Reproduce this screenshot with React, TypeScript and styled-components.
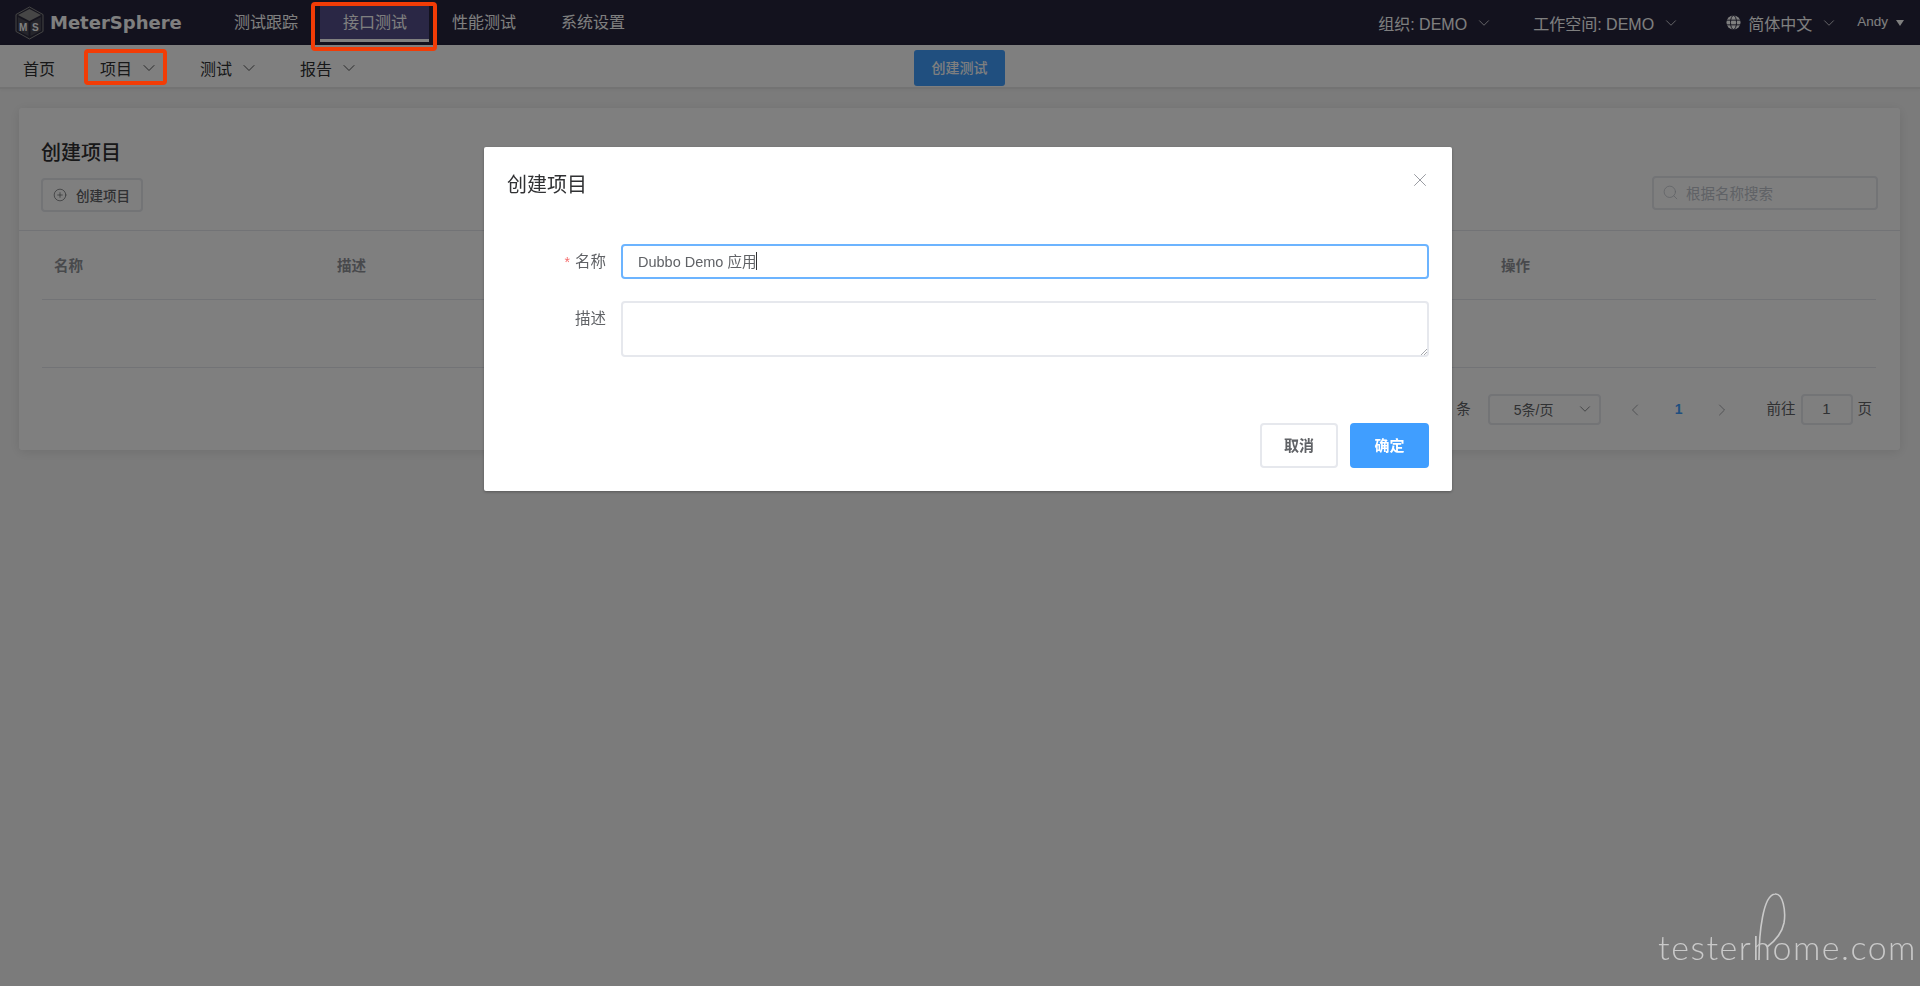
import React from "react";
import styled, { createGlobalStyle } from "styled-components";
import { ChevronDown, ChevronLeft, ChevronRight, CirclePlus, Search, X } from "lucide-react";

const GlobalStyle = createGlobalStyle`
  html, body {
    margin: 0;
    height: 100%;
    background: #f7f7f7;
    font-family: "Liberation Sans", "Noto Sans CJK SC", sans-serif;
    color: #303133;
  }
  * {
    box-sizing: border-box;
  }
`;

const Page = styled.div`
  width: 1920px;
  height: 986px;
  overflow: hidden;
`;

const Header = styled.header`
  height: 45px;
  background: #26243c;
  display: flex;
  align-items: center;
  color: #fff;
`;

const Logo = styled.div`
  width: 211px;
  padding-left: 15px;
  display: flex;
  align-items: center;
  gap: 6px;
`;

const LogoText = styled.span`
  font-family: "DejaVu Sans", sans-serif;
  font-weight: 700;
  font-size: 18px;
  color: #fff;
`;

const TopNav = styled.nav`
  display: flex;
  height: 45px;
`;

const TopNavItem = styled.div<{ active?: boolean }>`
  width: 109px;
  height: 40px;
  margin-top: 2px;
  padding-left: 23px;
  font-size: 16px;
  line-height: 41px;
  color: #fff;
  background: ${(props) => (props.active ? "#544f8a" : "transparent")};
  border-bottom: ${(props) => (props.active ? "3px solid #fff" : "none")};
`;

const HeaderRight = styled.div`
  margin-left: auto;
  display: flex;
  align-items: center;
  padding-right: 16px;
  height: 45px;
`;

const HeaderMenu = styled.div<{ width: number }>`
  width: ${(props) => props.width}px;
  display: flex;
  align-items: center;
  gap: 8px;
  font-size: 16px;
  white-space: nowrap;
`;

const Globe = styled.svg`
  width: 15px;
  height: 15px;
  margin-right: -1px;
`;

const UserName = styled.span`
  font-size: 13.5px;
  margin-right: 8px;
  position: relative;
  top: -1px;
`;

const Caret = styled.span`
  width: 0;
  height: 0;
  border-left: 4px solid transparent;
  border-right: 4px solid transparent;
  border-top: 6px solid #fff;
`;

const SubNav = styled.div`
  height: 44px;
  background: #fff;
  border-bottom: 2px solid #e6e6e6;
  box-shadow: 0 1px 4px rgba(0, 0, 0, 0.05);
  display: flex;
  align-items: center;
  padding: 4px 0 0 23px;
  font-size: 16px;
  color: #303133;
`;

const SubNavItem = styled.div<{ width: number }>`
  width: ${(props) => props.width}px;
  display: flex;
  align-items: center;
  gap: 7px;
  white-space: nowrap;
`;

const CreateTest = styled.div`
  margin-left: 514px;
  width: 91px;
  height: 36px;
  border-radius: 3px;
  background: #409eff;
  color: #fff;
  font-size: 14px;
  font-weight: 500;
  line-height: 36px;
  text-align: center;
`;

const Content = styled.main`
  padding: 19px 20px 0 19px;
`;

const Card = styled.section`
  height: 342px;
  background: #fff;
  border-radius: 3px;
  box-shadow: 0 2px 12px rgba(0, 0, 0, 0.1);
  display: flex;
  flex-direction: column;
`;

const CardHeader = styled.div`
  height: 123px;
  padding: 0 22px 18px;
  border-bottom: 1px solid #e4e7ed;
  display: flex;
  justify-content: space-between;
  align-items: flex-end;
`;

const CardTitle = styled.h2`
  margin: 0 0 10px;
  font-size: 20px;
  line-height: 30px;
  font-weight: 500;
  color: #303133;
`;

const PlainButton = styled.div`
  width: 102px;
  height: 34px;
  border: 2px solid #e6e8ed;
  border-radius: 4px;
  display: flex;
  align-items: center;
  gap: 9px;
  padding-left: 10px;
  font-size: 13.5px;
  font-weight: 500;
  color: #606266;
`;

const SearchBox = styled.div`
  width: 226px;
  height: 34px;
  margin: 0 0 2px;
  border: 2px solid #e6e8ed;
  border-radius: 4px;
  display: flex;
  align-items: center;
  gap: 7px;
  padding: 0 0 2px 8px;
  font-size: 14.5px;
  color: #c0c4cc;
`;

const TableHead = styled.div`
  margin: 0 24px 0 23px;
  height: 69px;
  padding-bottom: 2px;
  border-bottom: 1px solid #e4e7ed;
  display: grid;
  grid-template-columns: 12px 283px 1164px 1fr;
  align-items: center;
  font-size: 14.5px;
  font-weight: 700;
  color: #909399;
`;

const TableBody = styled.div`
  margin: 0 24px 0 23px;
  height: 68px;
  border-bottom: 1px solid #e4e7ed;
`;

const Pagination = styled.div`
  height: 82px;
  padding: 26px 28px 0 0;
  display: flex;
  justify-content: flex-end;
  align-items: flex-start;
  font-size: 14px;
  color: #606266;
`;

const PagerText = styled.span<{ gap?: number }>`
  margin-left: ${(props) => props.gap ?? 0}px;
  line-height: 31px;
  font-size: 14.5px;
`;

const SizeSelect = styled.div`
  width: 113px;
  height: 31px;
  margin-left: 17px;
  border: 2px solid #e6e8ed;
  border-radius: 4px;
  display: flex;
  align-items: center;
  padding: 0 0 1px 24px;
  gap: 23px;
  font-size: 14px;
`;

const PagerButton = styled.div<{ gap: number }>`
  height: 31px;
  margin-left: ${(props) => props.gap}px;
  display: flex;
  align-items: center;
  color: #909399;
`;

const PagerNumber = styled.div`
  margin-left: 30px;
  line-height: 31px;
  font-size: 14px;
  font-weight: 700;
  color: #409eff;
`;

const JumpInput = styled.div`
  width: 52px;
  height: 31px;
  margin: 0 5px;
  border: 2px solid #e6e8ed;
  border-radius: 4px;
  text-align: center;
  line-height: 26px;
  font-size: 15px;
`;

const Mask = styled.div`
  position: fixed;
  inset: 0;
  background: rgba(0, 0, 0, 0.5);
`;

const Dialog = styled.div`
  position: fixed;
  left: 484px;
  top: 147px;
  width: 968px;
  height: 344px;
  background: #fff;
  border-radius: 2px;
  box-shadow: 0 1px 3px rgba(0, 0, 0, 0.3);
  padding: 23px 23px 0;
  display: flex;
  flex-direction: column;
`;

const DialogHeader = styled.div`
  display: flex;
  justify-content: space-between;
  height: 30px;
`;

const DialogTitle = styled.span`
  font-size: 20px;
  line-height: 30px;
  color: #303133;
`;

const CloseButton = styled.span`
  margin: -1px -2px 0 0;
  color: #909399;
`;

const FormRow = styled.div<{ high?: boolean }>`
  display: grid;
  grid-template-columns: 114px 1fr;
  margin-top: ${(props) => (props.high ? "21px" : "44px")};
`;

const FormLabel = styled.label`
  padding-right: 15px;
  text-align: right;
  font-size: 15.5px;
  line-height: 36px;
  color: #606266;
`;

const Star = styled.span`
  color: #f56c6c;
  margin-right: 5px;
  font-size: 14px;
`;

const NameInput = styled.div`
  height: 35px;
  border: 2px solid #6cb4ff;
  border-radius: 4px;
  padding: 0 0 2px 15px;
  font-size: 14.5px;
  color: #606266;
  display: flex;
  align-items: center;
`;

const TextCaret = styled.span`
  width: 1px;
  height: 18px;
  background: #303133;
`;

const DescArea = styled.div`
  height: 56px;
  border: 2px solid #e6e8ed;
  border-radius: 4px;
  position: relative;
`;

const ResizeGrip = styled.svg`
  position: absolute;
  right: 0;
  bottom: 0;
  width: 7px;
  height: 7px;
`;

const DialogFooter = styled.div`
  margin-top: auto;
  padding-bottom: 23px;
  display: flex;
  justify-content: flex-end;
  gap: 12px;
`;

const DialogButton = styled.div<{ primary?: boolean }>`
  width: ${(props) => (props.primary ? "79px" : "78px")};
  height: 45px;
  border-radius: 4px;
  border: 2px solid ${(props) => (props.primary ? "#409eff" : "#e6e8ed")};
  background: ${(props) => (props.primary ? "#409eff" : "#fff")};
  color: ${(props) => (props.primary ? "#fff" : "#606266")};
  font-size: 15px;
  font-weight: 700;
  line-height: 41px;
  text-align: center;
`;

const Annotation = styled.div<{ left: number; top: number; width: number; height: number }>`
  position: fixed;
  left: ${(props) => props.left}px;
  top: ${(props) => props.top}px;
  width: ${(props) => props.width}px;
  height: ${(props) => props.height}px;
  border: 4px solid #f23c06;
  border-radius: 4px;
`;

const Watermark = styled.div`
  position: fixed;
  right: 3px;
  bottom: 19px;
  font-family: "Lato", sans-serif;
  font-weight: 300;
  font-size: 34px;
  letter-spacing: 1.500px;
  line-height: 40px;
  white-space: nowrap;
  color: #c9c9c9;
`;

const WatermarkLoop = styled.svg`
  position: absolute;
  left: 97px;
  top: -34px;
  width: 35px;
  height: 68px;
`;

function MsLogo() {
  return (
    <svg width="29" height="34" viewBox="0 0 29 34">
      <path d="M14.5 1 28 8.500v17L14.5 33 1 25.500v-17Z" fill="#2c2b3d" stroke="#8a8a8a" strokeWidth="1" />
      <path d="M14.5 3 26 9l-11.500 6L3 9Z" fill="#8c8c8c" />
      <path d="M3 11l10.500 5.500V30L3 24.500Z" fill="#a8a8a8" opacity="0.25" />
      <path d="M26 11l-10.500 5.500V30L26 24.500Z" fill="#a8a8a8" opacity="0.25" />
      <text x="4" y="25" fontSize="10" fontWeight="700" fontFamily="Liberation Sans" fill="#fff">M</text>
      <text x="17" y="25" fontSize="10" fontWeight="700" fontFamily="Liberation Sans" fill="#fff">S</text>
    </svg>
  );
}

function App() {
  return (
    <Page>
      <GlobalStyle />
      <Header>
        <Logo>
          <MsLogo />
          <LogoText>MeterSphere</LogoText>
        </Logo>
        <TopNav>
          <TopNavItem>测试跟踪</TopNavItem>
          <TopNavItem active>接口测试</TopNavItem>
          <TopNavItem>性能测试</TopNavItem>
          <TopNavItem>系统设置</TopNavItem>
        </TopNav>
        <HeaderRight>
          <HeaderMenu width={155}>
            组织: DEMO
            <ChevronDown size={18} strokeWidth={1} />
          </HeaderMenu>
          <HeaderMenu width={193}>
            工作空间: DEMO
            <ChevronDown size={18} strokeWidth={1} />
          </HeaderMenu>
          <HeaderMenu width={131}>
            <Globe viewBox="0 0 16 16">
              <circle cx="8" cy="8" r="7.500" fill="#fff" />
              <ellipse cx="8" cy="8" rx="3.200" ry="7.500" fill="none" stroke="#26243c" strokeWidth="1" />
              <path d="M0 5.500h16M0 10.500h16" stroke="#26243c" strokeWidth="1" />
            </Globe>
            简体中文
            <ChevronDown size={18} strokeWidth={1} />
          </HeaderMenu>
          <UserName>Andy</UserName>
          <Caret />
        </HeaderRight>
      </Header>
      <SubNav>
        <SubNavItem width={77}>首页</SubNavItem>
        <SubNavItem width={100}>
          项目
          <ChevronDown size={20} strokeWidth={1} />
        </SubNavItem>
        <SubNavItem width={100}>
          测试
          <ChevronDown size={20} strokeWidth={1} />
        </SubNavItem>
        <SubNavItem width={100}>
          报告
          <ChevronDown size={20} strokeWidth={1} />
        </SubNavItem>
        <CreateTest>创建测试</CreateTest>
      </SubNav>
      <Content>
        <Card>
          <CardHeader>
            <div>
              <CardTitle>创建项目</CardTitle>
              <PlainButton>
                <CirclePlus size={14} strokeWidth={1.200} />
                创建项目
              </PlainButton>
            </div>
            <SearchBox>
              <Search size={17} strokeWidth={1.100} />
              根据名称搜索
            </SearchBox>
          </CardHeader>
          <TableHead>
            <span />
            <span>名称</span>
            <span>描述</span>
            <span>操作</span>
          </TableHead>
          <TableBody />
          <Pagination>
            <PagerText>条</PagerText>
            <SizeSelect>
              5条/页
              <ChevronDown size={18} strokeWidth={1} />
            </SizeSelect>
            <PagerButton gap={24}>
              <ChevronLeft size={20} strokeWidth={1} />
            </PagerButton>
            <PagerNumber>1</PagerNumber>
            <PagerButton gap={29}>
              <ChevronRight size={20} strokeWidth={1} />
            </PagerButton>
            <PagerText gap={35}>前往</PagerText>
            <JumpInput>1</JumpInput>
            <PagerText>页</PagerText>
          </Pagination>
        </Card>
      </Content>
      <Mask />
      <Dialog>
        <DialogHeader>
          <DialogTitle>创建项目</DialogTitle>
          <CloseButton>
            <X size={22} strokeWidth={1} />
          </CloseButton>
        </DialogHeader>
        <FormRow>
          <FormLabel>
            <Star>*</Star>名称
          </FormLabel>
          <NameInput>
            Dubbo Demo 应用
            <TextCaret />
          </NameInput>
        </FormRow>
        <FormRow high>
          <FormLabel>描述</FormLabel>
          <DescArea>
            <ResizeGrip viewBox="0 0 7 7">
              <path d="M7 1 1 7M7 4 4 7" stroke="#909399" strokeWidth="0.800" />
            </ResizeGrip>
          </DescArea>
        </FormRow>
        <DialogFooter>
          <DialogButton>取消</DialogButton>
          <DialogButton primary>确定</DialogButton>
        </DialogFooter>
      </Dialog>
      <Annotation left={311} top={2} width={126} height={49} />
      <Annotation left={84} top={49} width={83} height={36} />
      <Watermark>
        testerhome.com
        <WatermarkLoop viewBox="0 0 35 68">
          <path d="M4 67C4 40 8 2 20 1c8-1 11 17 9 29-2 10-9 18-17 24" fill="none" stroke="#c9c9c9" strokeWidth="1.600" />
        </WatermarkLoop>
      </Watermark>
    </Page>
  );
}

export default App;
